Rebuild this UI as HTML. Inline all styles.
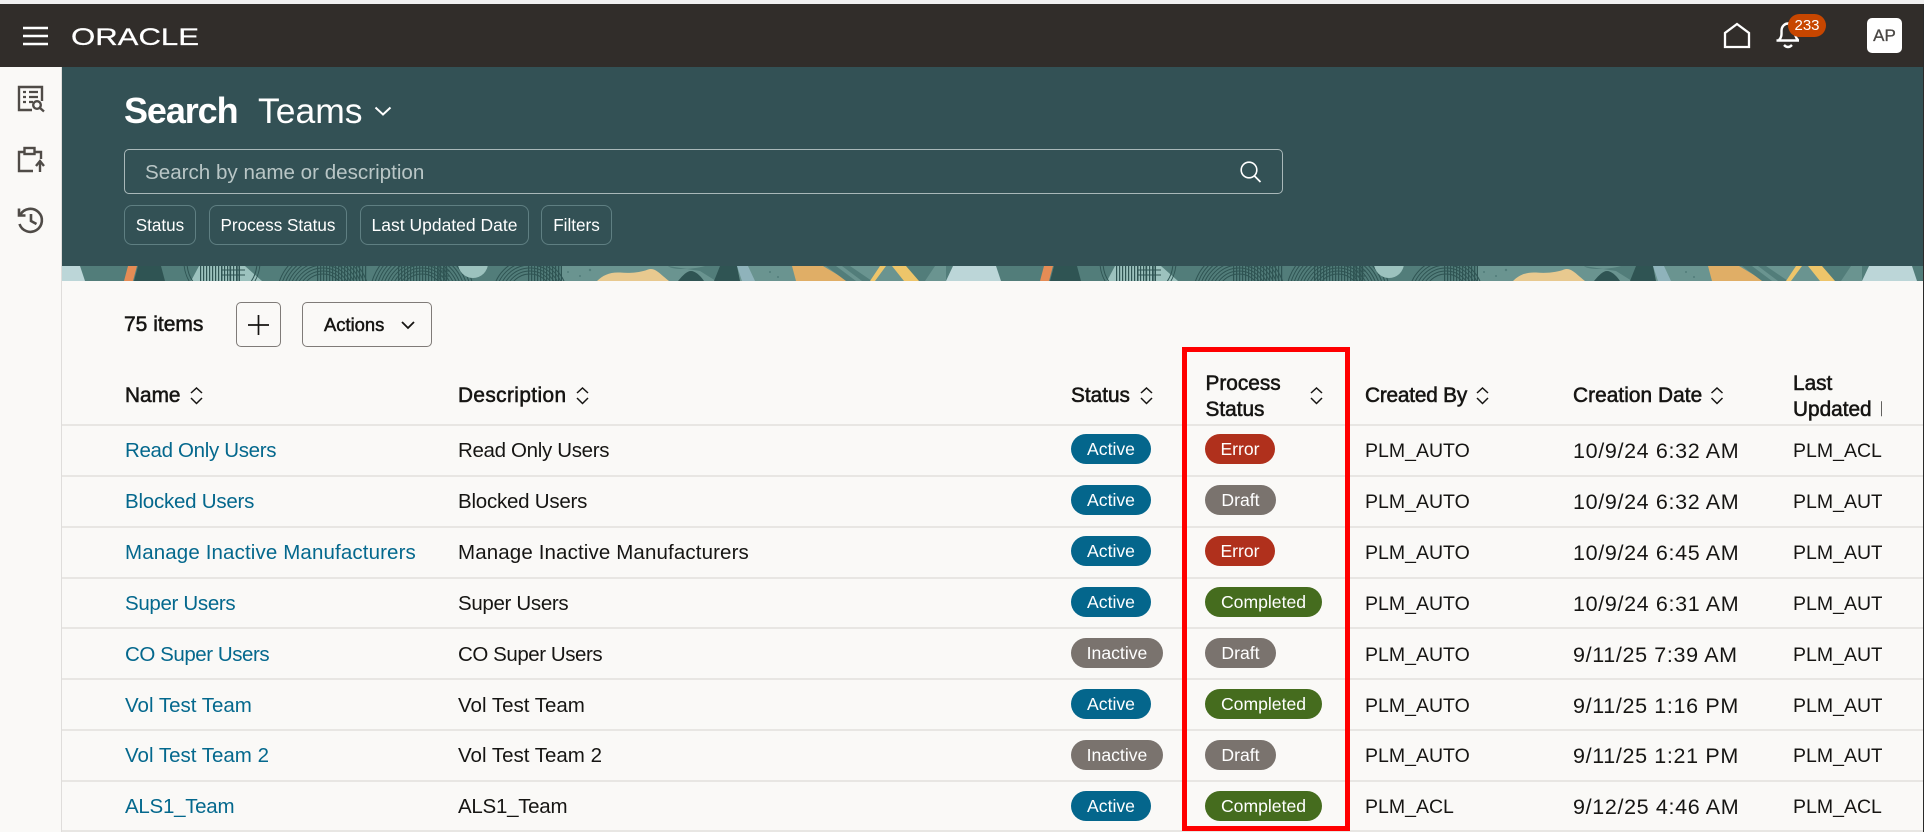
<!DOCTYPE html>
<html lang="en"><head><meta charset="utf-8"><title>Search Teams</title>
<style>
html,body{margin:0;padding:0;background:#faf9f7}
body{width:1924px;height:832px;position:relative;overflow:hidden;font-family:"Liberation Sans",sans-serif;color:#161513}
.a{position:absolute;white-space:nowrap}
.top{left:0;top:0;width:1924px;height:4px;background:#f0f0f0}
.hdr{left:0;top:4px;width:1924px;height:63px;background:#312d2a}
.teal{left:62px;top:67px;width:1862px;height:199px;background:#335155}
.side{left:0;top:67px;width:61px;height:765px;background:#faf9f7;border-right:1px solid #dfdddb}
.edge{left:1923px;top:4px;width:1px;height:828px;background:#2a2a2a;z-index:9}
.chip{top:205px;height:38px;line-height:39px;border:1px solid #5f7f82;border-radius:8px;color:#fff;font-size:17.1px;text-align:center;box-sizing:content-box}
.line{left:62px;width:1861px;height:2px;background:#e8e6e3}
.n{left:125px;font-size:20.5px;color:#04688d}
.d{left:458px;font-size:20.5px}
.c{left:1365px;font-size:19.5px}
.t{left:1573px;font-size:21.5px;letter-spacing:.65px}
.u{left:1793px;width:89px;overflow:hidden;font-size:19.5px}
.cell{height:50px;line-height:50px}
.p{height:30px;line-height:30px;border-radius:15px;color:#fff;font-size:17.6px;text-align:center}
.s{left:1071px}.ps{left:1205px}
.act{width:80px;background:#04668c}.ina{width:92px;background:#7a736e}
.err{width:70px;background:#b0301c}.dra{width:71px;background:#7a736e}.com{width:117px;background:#456c1e}
.th{font-size:20.8px;-webkit-text-stroke:.55px #161513;line-height:26px}
.l1{letter-spacing:-.33px}.l2{letter-spacing:-.23px}.l3{letter-spacing:.13px}.l4{letter-spacing:-.33px}.l5{letter-spacing:-.44px}.l8{letter-spacing:-.27px}
</style></head><body>
<div class="a top"></div>
<div class="a hdr"></div>
<div class="a teal"></div>

<svg class="a" style="left:0;top:266px;overflow:hidden" width="1924" height="15" viewBox="0 0 1924 15">
<defs>
<g id="tile">
<rect x="100" y="0" width="916" height="15" fill="#527d7a"/>
<rect x="562" y="0" width="384" height="15" fill="#6a9490"/>
<polygon points="953,0 996,0 1001,15 946,15" fill="#bcd6d8"/>
<polygon points="128,0 137,0 133,15 124,15" fill="#e58c55"/>
<polygon points="138,0 161,0 165,15 134,15" fill="#2f5453"/>
<polygon points="199,0 245,0 262,15 191,15" fill="#9cc2be"/>
<g fill="none" stroke="#2f5453" stroke-width="1">
<circle cx="323" cy="30" r="22"/><circle cx="323" cy="30" r="25"/><circle cx="323" cy="30" r="28"/><circle cx="323" cy="30" r="31"/><circle cx="323" cy="30" r="34"/><circle cx="323" cy="30" r="37"/><circle cx="323" cy="30" r="40"/><circle cx="323" cy="30" r="43"/><circle cx="323" cy="30" r="46"/>
<circle cx="422" cy="30" r="22"/><circle cx="422" cy="30" r="25"/><circle cx="422" cy="30" r="28"/><circle cx="422" cy="30" r="31"/><circle cx="422" cy="30" r="34"/><circle cx="422" cy="30" r="37"/><circle cx="422" cy="30" r="40"/><circle cx="422" cy="30" r="43"/><circle cx="422" cy="30" r="46"/><circle cx="422" cy="30" r="49"/><circle cx="422" cy="30" r="52"/>
<circle cx="530" cy="30" r="22"/><circle cx="530" cy="30" r="25"/><circle cx="530" cy="30" r="28"/><circle cx="530" cy="30" r="31"/><circle cx="530" cy="30" r="34"/><circle cx="530" cy="30" r="37"/>
<circle cx="222" cy="-4" r="38"/><circle cx="222" cy="-4" r="35"/>
</g>
<circle cx="473" cy="-3" r="15" fill="#9cc2be"/>
<g fill="none" stroke="#2f5453" stroke-dasharray="1.2 1.8" stroke-width="15">
<path d="M317 7.5H368"/>
<path d="M398 7.5H449"/>
<path d="M528 7.5H562"/>
<path d="M200 7.5H240"/>
</g>
<path d="M222 0V15M230 0V15M238 0V15M222 4H245M222 9H245" stroke="#2f5453" stroke-width="1" fill="none"/>
<path d="M439 0V15M445 0V15M439 5H450M439 10H450" stroke="#2f5453" stroke-width="1" fill="none"/>
<path d="M597 15C603 9 610 6 620 6.500C632 7.500 642 6 648 3.500C655 1 660 8 669 15Z" fill="#e8c98f"/>
<path d="M668 0C672 4 690 4 705 0L730 0L716 15L700 5Z" fill="#527d7a"/>
<path d="M678 15C683 9 687 5 691 5C695 5 700 9 704 15Z" fill="#2f5453"/>
<polygon points="720,0 737,0 740,15 714,15" fill="#2f5453"/>
<polygon points="737,0 748,0 755,15 742,15" fill="#8fb3bb"/>
<polygon points="792,0 823,0 848,15 796,15" fill="#e0ae66"/>
<g fill="#527d7a">
<polygon points="826,0 836,0 856,15 846,15"/><polygon points="842,0 850,0 872,15 862,15"/><polygon points="905,0 935,0 925,15 918,15"/>
</g>
<polygon points="880,0 886,0 875,15 870,15" fill="#eec56a"/>
<polygon points="892,0 906,0 919,15 904,15" fill="#eec56a"/>
<g fill="#527d7a"><circle cx="770" cy="6" r="1"/><circle cx="778" cy="11" r="1"/><circle cx="590" cy="4" r="1.200"/><circle cx="580" cy="10" r="1"/><circle cx="568" cy="6" r="1"/></g>
</g>
</defs>
<use href="#tile" x="-916"/><use href="#tile" x="0"/><use href="#tile" x="916"/><use href="#tile" x="1832"/>
</svg>

<div class="a side"></div>
<div class="a edge"></div>

<svg class="a" style="left:0;top:0;z-index:5" width="1924" height="832" viewBox="0 0 1924 832" fill="none">
<path d="M23 28H48M23 36H48M23 44H48" stroke="#fff" stroke-width="2.400"/>
<text x="71" y="44.800" font-family="Liberation Sans" font-size="24" fill="#fff" stroke="#fff" stroke-width=".25" textLength="128" lengthAdjust="spacingAndGlyphs">ORACLE</text>
<g stroke="#4f4b47" stroke-width="2.400">
<path d="M32 110H19V87H42V101"/>
<path d="M23 92H26M29 92H38M23 97H26M29 97H38M23 102H26M29 102H33" stroke-width="2.200"/>
<circle cx="37" cy="105" r="3.800"/><path d="M40 108L44 111.500"/>
</g>
<g stroke="#4f4b47" stroke-width="2.400">
<path d="M33 171H19V152H24M35 152H41V159"/>
<rect x="24.500" y="148" width="10" height="6"/>
<path d="M40 172V161" /><path d="M36 166L40 161L44 166" />
</g>
<g stroke="#4f4b47" stroke-width="2.600">
<path d="M20.500 214.500A11.500 11.500 0 1 1 19.500 224"/>
<path d="M19 208.500V215.500H25.500"/>
<path d="M31 214V221L36.500 224"/>
</g>
<path d="M1725 47V33L1737 24L1749 33V47Z" stroke="#fff" stroke-width="2.300"/>
<path d="M1776.500 40.500H1799M1779 40C1782 37 1781.500 34 1781.500 31C1781.500 26 1785 23.500 1788 23.500C1792 23.500 1795 26 1795 31C1795 34 1795 37 1798 40" stroke="#fff" stroke-width="2.400"/>
<path d="M1784 45Q1788 49 1792 45" stroke="#fff" stroke-width="2.400"/>
<path d="M375.500 107.500L383 114.500L390.500 107.500" stroke="#fff" stroke-width="2"/>
<circle cx="1249" cy="170" r="7.800" stroke="#fff" stroke-width="1.600"/>
<path d="M1254.500 176L1260.500 182" stroke="#fff" stroke-width="1.800"/>
<path d="M258.500 315V335M248 325H269" stroke="#161513" stroke-width="1.700"/>
<path d="M402 322L408 328L414 322" stroke="#161513" stroke-width="1.800"/>
<g stroke="#161513" stroke-width="1.500">
<path d="M191 393L196.500 388L202 393M191 398L196.500 403.500L202 398"/>
<path d="M577 393L582.500 388L588 393M577 398L582.500 403.500L588 398"/>
<path d="M1141 393L1146.500 388L1152 393M1141 398L1146.500 403.500L1152 398"/>
<path d="M1311 393L1316.500 388L1322 393M1311 398L1316.500 403.500L1322 398"/>
<path d="M1477 393L1482.500 388L1488 393M1477 398L1482.500 403.500L1488 398"/>
<path d="M1711.500 393L1717 388L1722.500 393M1711.500 398L1717 403.500L1722.500 398"/>
</g>
</svg>

<div class="a" style="left:124px;top:89px;font-size:36px;letter-spacing:-1.1px;font-weight:700;color:#fff;line-height:44px">Search</div>
<div class="a" style="left:258px;top:89px;font-size:35.5px;color:#fff;line-height:44px">Teams</div>
<div class="a" style="left:124px;top:149px;width:1157px;height:43px;border:1.500px solid #a9b8b9;border-radius:5px"></div>
<div class="a" style="left:145px;top:150px;line-height:45px;font-size:20.6px;color:#b9c6c6">Search by name or description</div>
<div class="a chip" style="left:124px;width:70px">Status</div>
<div class="a chip" style="left:209px;width:136px">Process Status</div>
<div class="a chip" style="left:360px;width:167px;font-size:17.5px">Last Updated Date</div>
<div class="a chip" style="left:541px;width:69px">Filters</div>
<div class="a" style="left:1788px;top:14px;width:38px;height:23px;line-height:23px;border-radius:12px;background:#c74600;color:#fff;font-size:15px;text-align:center;z-index:6">233</div>
<div class="a" style="left:1867px;top:18px;width:35px;height:35px;line-height:35px;border-radius:5px;background:#fff;color:#4a4744;font-size:17px;-webkit-text-stroke:.3px #4a4744;text-align:center">AP</div>

<div class="a" style="left:124px;top:312px;line-height:26px;font-size:21px;-webkit-text-stroke:.55px #161513">75 items</div>
<div class="a" style="left:236px;top:302px;width:43px;height:43px;border:1px solid #7f7b78;border-radius:5px"></div>
<div class="a" style="left:302px;top:302px;width:128px;height:43px;border:1px solid #7f7b78;border-radius:5px"></div>
<div class="a" style="left:324px;top:312px;line-height:26px;font-size:18.4px;-webkit-text-stroke:.5px #161513">Actions</div>

<div class="a th" style="left:125px;top:383px">Name</div>
<div class="a th" style="left:458px;top:383px;letter-spacing:.4px">Description</div>
<div class="a th" style="left:1071px;top:383px">Status</div>
<div class="a th" style="left:1205.500px;top:371px;line-height:25.500px">Process<br>Status</div>
<div class="a th" style="left:1365px;top:383px;letter-spacing:-.2px">Created By</div>
<div class="a th" style="left:1573px;top:383px;letter-spacing:.07px">Creation Date</div>
<div class="a th" style="left:1793px;top:371px;width:89px;overflow:hidden;line-height:25.500px;word-spacing:2.500px">Last<br>Updated By</div>

<div class="a line" style="top:424px"></div>
<div class="a line" style="top:475px"></div>
<div class="a line" style="top:526px"></div>
<div class="a line" style="top:577px"></div>
<div class="a line" style="top:627px"></div>
<div class="a line" style="top:678px"></div>
<div class="a line" style="top:729px"></div>
<div class="a line" style="top:780px"></div>
<div class="a line" style="top:830px"></div>

<div class="a cell n l1" style="top:426px">Read Only Users</div>
<div class="a cell d l1" style="top:426px">Read Only Users</div>
<div class="a p s act" style="top:434px">Active</div>
<div class="a p ps err" style="top:434px">Error</div>
<div class="a cell c" style="top:426px">PLM_AUTO</div>
<div class="a cell t" style="top:426px">10/9/24 6:32 AM</div>
<div class="a cell u" style="top:426px">PLM_ACL</div>

<div class="a cell n l2" style="top:477px">Blocked Users</div>
<div class="a cell d l2" style="top:477px">Blocked Users</div>
<div class="a p s act" style="top:485px">Active</div>
<div class="a p ps dra" style="top:485px">Draft</div>
<div class="a cell c" style="top:477px">PLM_AUTO</div>
<div class="a cell t" style="top:477px">10/9/24 6:32 AM</div>
<div class="a cell u" style="top:477px">PLM_AUTO</div>

<div class="a cell n l3" style="top:528px">Manage Inactive Manufacturers</div>
<div class="a cell d l3" style="top:528px">Manage Inactive Manufacturers</div>
<div class="a p s act" style="top:536px">Active</div>
<div class="a p ps err" style="top:536px">Error</div>
<div class="a cell c" style="top:528px">PLM_AUTO</div>
<div class="a cell t" style="top:528px">10/9/24 6:45 AM</div>
<div class="a cell u" style="top:528px">PLM_AUTO</div>

<div class="a cell n l4" style="top:579px">Super Users</div>
<div class="a cell d l4" style="top:579px">Super Users</div>
<div class="a p s act" style="top:587px">Active</div>
<div class="a p ps com" style="top:587px">Completed</div>
<div class="a cell c" style="top:579px">PLM_AUTO</div>
<div class="a cell t" style="top:579px">10/9/24 6:31 AM</div>
<div class="a cell u" style="top:579px">PLM_AUTO</div>

<div class="a cell n l5" style="top:630px">CO Super Users</div>
<div class="a cell d l5" style="top:630px">CO Super Users</div>
<div class="a p s ina" style="top:638px">Inactive</div>
<div class="a p ps dra" style="top:638px">Draft</div>
<div class="a cell c" style="top:630px">PLM_AUTO</div>
<div class="a cell t" style="top:630px">9/11/25 7:39 AM</div>
<div class="a cell u" style="top:630px">PLM_AUTO</div>

<div class="a cell n" style="top:681px">Vol Test Team</div>
<div class="a cell d" style="top:681px">Vol Test Team</div>
<div class="a p s act" style="top:689px">Active</div>
<div class="a p ps com" style="top:689px">Completed</div>
<div class="a cell c" style="top:681px">PLM_AUTO</div>
<div class="a cell t" style="top:681px">9/11/25 1:16 PM</div>
<div class="a cell u" style="top:681px">PLM_AUTO</div>

<div class="a cell n" style="top:731px">Vol Test Team 2</div>
<div class="a cell d" style="top:731px">Vol Test Team 2</div>
<div class="a p s ina" style="top:740px">Inactive</div>
<div class="a p ps dra" style="top:740px">Draft</div>
<div class="a cell c" style="top:731px">PLM_AUTO</div>
<div class="a cell t" style="top:731px">9/11/25 1:21 PM</div>
<div class="a cell u" style="top:731px">PLM_AUTO</div>

<div class="a cell n l8" style="top:782px">ALS1_Team</div>
<div class="a cell d l8" style="top:782px">ALS1_Team</div>
<div class="a p s act" style="top:791px">Active</div>
<div class="a p ps com" style="top:791px">Completed</div>
<div class="a cell c" style="top:782px">PLM_ACL</div>
<div class="a cell t" style="top:782px">9/12/25 4:46 AM</div>
<div class="a cell u" style="top:782px">PLM_ACL</div>

<div class="a" style="left:1182px;top:347px;width:158px;height:474px;border:5px solid #ff0000;z-index:7"></div>
</body></html>
